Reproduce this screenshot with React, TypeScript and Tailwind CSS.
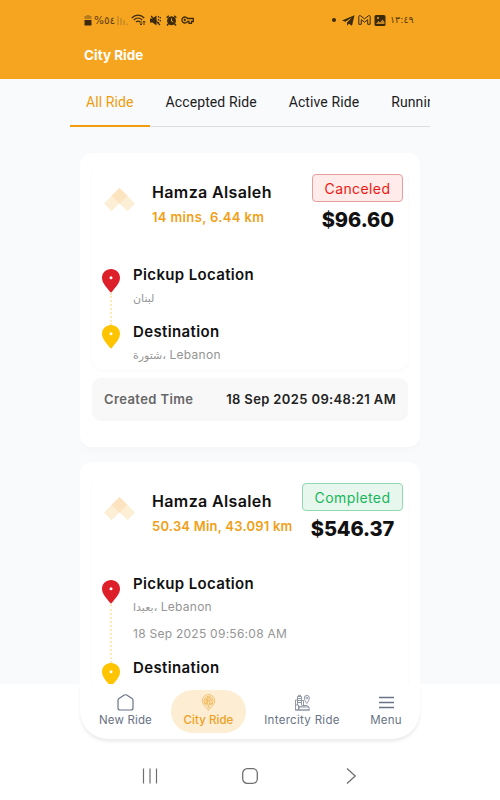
const tabs = [
    { label: 'All Ride', active: true },
    { label: 'Accepted Ride' },
    { label: 'Active Ride' },
    { label: 'Running Ride' },
]

const StatusBar = () => {
    return (
        <div className="flex h-[40px] items-center justify-between pr-[14px] pl-[14px] text-[#3b2a0c]">
            <div className="flex items-center">
                <svg className="h-[11px] w-[8px]" viewBox="0 0 8 11">
                    <path d="M2.5 0h3v1H7.500V4H.5V1h2z" fill="#b37a1e" />
                    <path d="M.5 5h7v5.500H.5z" fill="currentColor" />
                </svg>
                <span className="ml-[2px] w-[20px] font-['DejaVu_Sans'] text-[10.5px] leading-none opacity-85 [direction:ltr] [unicode-bidi:bidi-override]">%٥٤</span>
                <svg className="ml-[3px] h-[10px] w-[11px]" viewBox="0 0 11 10" stroke="#bf8424" strokeWidth="1.2">
                    <path d="M1 1v9M4 3v7M7 5v5M10 8.5v1.5" />
                </svg>
                <svg className="ml-[3px] h-[12px] w-[15px]" viewBox="0 0 15 12" fill="none" stroke="currentColor" strokeWidth="1.1">
                    <path d="M.7 4C4.5.2 9.5.2 13.3 4M2.8 6c2.600-2.500 5.800-2.500 8.400 0M5 8c1.300-1.200 2.700-1.200 4 0" />
                    <path d="M10 7v4M8.700 9.700L10 11l1.300-1.300M13 11V7M11.700 8.300L13 7l1.300 1.300" strokeWidth=".9" />
                </svg>
                <svg className="ml-[4px] h-[11px] w-[11px]" viewBox="0 0 11 11" fill="currentColor">
                    <path d="M0 3.500h2.500L6.500.5v10l-4-3H0z" />
                    <path d="M1 1l9 9M8.500 1v1.500M8.500 4v1.500M8.500 7v1M10.300 2v1.500M10.300 5v1.500" stroke="currentColor" strokeWidth="1.200" />
                </svg>
                <svg className="ml-[5px] h-[11px] w-[11px]" viewBox="0 0 11 11" fill="none" stroke="currentColor">
                    <circle cx="5.500" cy="5.800" r="4" fill="currentColor" />
                    <path d="M.7 2.700L2.800.8M10.300 2.700L8.200.8M2.300 9L1 10.500M8.700 9l1.300 1.500" strokeWidth="1.500" />
                    <path d="M5.500 3.500V6l1.800 1" stroke="#f6a521" />
                </svg>
                <svg className="ml-[4px] h-[8px] w-[13px]" viewBox="0 0 13 8" fill="none" stroke="currentColor" strokeWidth="1.300">
                    <path d="M6.500 2.500A3 3 0 1 0 6.500 5.500H8v1.800h2.500V5.500h1.800v-3z" />
                    <circle cx="3.800" cy="4" r=".5" />
                </svg>
            </div>
            <div className="flex items-center">
                <span className="size-[4px] rounded-full bg-[#3b2a0c]" />
                <svg className="ml-[6px] h-[11px] w-[13px]" viewBox="0 0 13 11" fill="currentColor">
                    <path d="M12.500.3L0 5.400l3.300 1.300L10 2.500 5 7.400v3.300l1.800-2 3.200 2z" />
                </svg>
                <svg className="ml-[3px] h-[10px] w-[13px]" viewBox="0 0 13 10" fill="none" stroke="currentColor" strokeWidth="1">
                    <path d="M.8 9.300V1.500C.8.500 2 .3 2.700.9l3.800 3 3.800-3c.8-.6 1.900-.4 1.900.6v7.800H9.700V4.700L6.500 7.200 3.300 4.700v4.600z" />
                </svg>
                <svg className="ml-[3px] h-[11px] w-[12px]" viewBox="0 0 12 11">
                    <rect x=".5" width="11" height="11" rx="1.500" fill="currentColor" />
                    <path d="M2 9l2.500-3 1.700 1.500L8.500 4.500l2 2.500v2z" fill="#c98924" />
                    <circle cx="4" cy="3" r="1" fill="#f6a521" />
                </svg>
                <span className="ml-[4px] w-[26px] font-['DejaVu_Sans'] text-[9.5px] leading-none whitespace-nowrap opacity-85">١٣:٤٩</span>
            </div>
        </div>
    )
}

const Pin = ({ color }: { color: string }) => {
    return (
        <svg className="h-[24px] w-[18px] shrink-0" viewBox="0 0 18 24">
            <path d="M9 0C4 0 0 3.900 0 8.800 0 14.500 5 18.500 8 22.800q1 1.400 2 0C13 18.500 18 14.500 18 8.800 18 3.900 14 0 9 0z" fill={color} />
            <circle cx="9" cy="8.800" r="1.500" fill="#fff" />
        </svg>
    )
}

const Logo = () => {
    return (
        <svg className="mt-[23px] h-[24px] w-[32px] shrink-0" viewBox="0 0 32 24">
            <path d="M15.500 0L31 15.500l-7.500 7.800-8-7.800-8 7.800L0 15.500z" fill="#fdeed6" />
            <path d="M15.500 0l8 7.800-8 7.800-8-7.800z" fill="#fce4c0" />
        </svg>
    )
}

type Address = {
    local: string
    country?: string
}

const AddressLine = ({ local, country }: Address) => {
    return (
        <p className="mt-[4px] flex h-[18px] items-center whitespace-nowrap">
            <bdi className="text-[11px] tracking-normal">{local}</bdi>
            {country && <span className="whitespace-pre">، {country}</span>}
        </p>
    )
}

type RideProps = {
    trip: string
    tripClass: string
    status: string
    statusClass: string
    price: string
    priceClass: string
    pickup: Address
    pickupTime?: string
    destination: Address
    created: string
}

const RideCard = (ride: RideProps) => {
    return (
        <div className="h-[294px] shrink-0 rounded-[12px] bg-white px-[12px] pt-[12px] shadow-[0_3px_6px_rgba(15,23,42,0.02)]">
            <div className={`rounded-[10px] px-[5px] shadow-[0_1px_3px_rgba(0,0,0,0.035)] ${ride.pickupTime ? 'h-[234px]' : 'h-[205px]'}`}>
                <div className="flex h-[96px] pl-[7px]">
                    <Logo />
                    <div className="ml-[16px] flex-1 whitespace-nowrap">
                        <h2 className="mt-[16px] text-[16px] leading-[22px] font-semibold tracking-[0.370px] text-[#111]">Hamza Alsaleh</h2>
                        <p className={`mt-[5px] text-[13px] leading-[18px] font-semibold text-[#f09f16] ${ride.tripClass}`}>{ride.trip}</p>
                    </div>
                    <div className="flex flex-col items-end pt-[9px]">
                        <span className={`flex h-[28px] items-center justify-center rounded-[4px] border text-[14px] ${ride.statusClass}`}>{ride.status}</span>
                        <strong className={`mt-[6px] mr-[9px] text-[20px] leading-[24px] font-extrabold text-[#111] ${ride.priceClass}`}>{ride.price}</strong>
                    </div>
                </div>
                <div className="flex pl-[5px]">
                    <div className={`flex shrink-0 flex-col items-center ${ride.pickupTime ? 'h-[117px] pt-[10px]' : 'h-[88px] pt-[8px]'}`}>
                        <Pin color="#dc1f28" />
                        <span className="w-0 flex-1 border-l-2 border-dotted border-[#fce9b8]" />
                        <Pin color="#fec400" />
                    </div>
                    <div className="ml-[13px] text-[12px] leading-[18px] tracking-[0.260px] text-[#959595]">
                        <h3 className="mt-[3px] text-[15px] leading-[21px] font-semibold tracking-[0.350px] text-[#111]">Pickup Location</h3>
                        <AddressLine {...ride.pickup} />
                        {ride.pickupTime && <p className="mt-[9px] h-[18px] whitespace-nowrap">{ride.pickupTime}</p>}
                        <h3 className={`text-[15px] leading-[20px] font-semibold tracking-[0.370px] text-[#111] ${ride.pickupTime ? 'mt-[15px]' : 'mt-[15px]'}`}>Destination</h3>
                        <AddressLine {...ride.destination} />
                    </div>
                </div>
            </div>
            <div className="mt-[8px] flex h-[43px] items-center justify-between rounded-[9px] bg-[#f8f8f8] px-[12px] text-[13px] font-semibold">
                <span className="tracking-[0.400px] text-[#666]">Created Time</span>
                <span className="tracking-[0.370px] text-[#222]">{ride.created}</span>
            </div>
        </div>
    )
}

const HomeIcon = () => {
    return (
        <svg className="h-[17px] w-[17px]" viewBox="0 0 17 17" fill="none" stroke="currentColor" strokeWidth="1.200" strokeLinejoin="round">
            <path d="M1 6.500Q1 5.300 2 4.600L7.300 1.100Q8.500.4 9.700 1.100L15 4.600q1 .7 1 1.900V14q0 2-2 2H3q-2 0-2-2z" />
        </svg>
    )
}

const CityIcon = () => {
    return (
        <svg className="h-[17px] w-[17px] opacity-80" viewBox="0 0 17 17" fill="none" stroke="currentColor" strokeWidth=".7">
            <path d="M8.500 16.300C6.500 13.300 2.300 10.500 2.300 6.800a6.200 6.200 0 1 1 12.400 0c0 3.700-4.200 6.500-6.200 9.500z" />
            <circle cx="8.500" cy="6.800" r="4.500" />
            <path d="M5 10V5.500h2V10M7 10V3.500h3V10M10 5.500h2V10M4.500 10h8M7 5h3M7 6.500h3M7 8h3" />
            <circle cx="8.500" cy="13" r=".7" />
        </svg>
    )
}

const IntercityIcon = () => {
    return (
        <svg className="h-[17px] w-[17px] opacity-80" viewBox="0 0 17 17" fill="none" stroke="currentColor" strokeWidth=".9">
            <path d="M3.500 11V2.500h4V11M4.500 2.500V1.300h2v1.200M3.500 4.500h4M3.500 6.500h4M3.500 8.500h4M1.500 11V6h2M7.500 6.500h2v5M1.500 11v5h3v-5zM9 11.500h4l2 1.500v3H5v-3zM5 13h10M10 11.500V13M1 16h15" />
            <path d="M12.800 9.500C12 8 10.300 6.300 10.300 4a2.500 2.700 0 1 1 5 0c0 2.300-1.500 4-2.500 5.500z" />
            <circle cx="12.800" cy="4" r=".9" />
        </svg>
    )
}

const MenuIcon = () => {
    return (
        <svg className="h-[17px] w-[17px]" viewBox="0 0 17 17" fill="none" stroke="currentColor" strokeWidth="1.300">
            <path d="M1 3.500h15M1 8.500h15M1 13.500h15" />
        </svg>
    )
}

const BottomNav = () => {
    return (
        <div className="h-[116px] shrink-0 bg-white">
            <nav className="mx-auto flex h-[55px] w-[340px] rounded-b-[28px] bg-white pt-[6px] text-[11.500px] whitespace-nowrap text-[#697386] shadow-[0_3px_3px_rgba(0,0,0,0.07)]">
                <div className="flex h-[43px] w-[91px] flex-col items-center pt-[4px]">
                    <HomeIcon />
                    <span className="mt-[1px] leading-[17px] tracking-[0.150px]">New Ride</span>
                </div>
                <div className="flex h-[43px] w-[75px] flex-col items-center rounded-full bg-[#fdedd3] pt-[4px] text-[#eda022]">
                    <CityIcon />
                    <span className="mt-[1px] leading-[17px] font-medium tracking-[0.050px]">City Ride</span>
                </div>
                <div className="flex h-[43px] w-[112px] flex-col items-center pt-[4px]">
                    <IntercityIcon />
                    <span className="mt-[1px] leading-[17px] tracking-[0.300px]">Intercity Ride</span>
                </div>
                <div className="flex h-[43px] w-[56px] flex-col items-center pt-[4px]">
                    <MenuIcon />
                    <span className="mt-[1px] leading-[17px] tracking-[0.200px]">Menu</span>
                </div>
            </nav>
            <div className="mx-auto flex h-[61px] w-[217px] items-center justify-between pt-[12px] text-[#6f6f6f]">
                <svg className="h-[18px] w-[16px]" viewBox="0 0 16 18" fill="none" stroke="currentColor" strokeWidth="1.200">
                    <path d="M1.500 1.500v15M8 1.500v15M14.500 1.500v15" />
                </svg>
                <svg className="h-[18px] w-[18px]" viewBox="0 0 18 18" fill="none" stroke="currentColor" strokeWidth="1.300">
                    <rect x="1.700" y="1.700" width="14.600" height="14.600" rx="4.500" />
                </svg>
                <svg className="h-[18px] w-[16px]" viewBox="0 0 16 18" fill="none" stroke="currentColor" strokeWidth="1.300">
                    <path d="M4 1.500L12.200 9 4 16.500" />
                </svg>
            </div>
        </div>
    )
}

const App = () => {
    return (
        <div className="flex h-[800px] w-[500px] flex-col overflow-hidden bg-[#f8fafc] font-['Inter','DejaVu_Sans',sans-serif]">
            <header className="h-[79px] shrink-0 bg-[#f6a521]">
                <div className="mx-auto w-[360px]">
                    <StatusBar />
                    <h1 className="mt-[5px] pl-[14px] text-[13.500px] leading-[20px] font-bold text-white">City Ride</h1>
                </div>
            </header>
            <div className="mx-auto flex h-[48px] w-[360px] shrink-0 overflow-hidden font-['Roboto',sans-serif] text-[14px] tracking-[0.100px] whitespace-nowrap text-[#1c1c1c] shadow-[inset_0_-1px_0_#dcdee1]">
                {tabs.map((tab) => (
                    <div key={tab.label} className={`flex h-[48px] shrink-0 items-center border-b-2 px-[16px] ${tab.active ? 'border-[#f09c0c] text-[#f09c0c]' : 'border-transparent'}`}>
                        {tab.label}
                    </div>
                ))}
            </div>
            <main className="mx-auto flex min-h-0 w-[340px] flex-1 flex-col gap-[15px] overflow-hidden pt-[26px]">
                <RideCard
                    trip="14 mins, 6.44 km"
                    tripClass="tracking-[0.360px]"
                    status="Canceled"
                    statusClass="w-[91px] border-[#e5a09d] bg-[#ffebe9] text-[#eb1812] tracking-[0.400px]"
                    price="$96.60"
                    priceClass="tracking-[-0.050px]"
                    pickup={{ local: 'لبنان' }}
                    destination={{ local: 'شتورة', country: 'Lebanon' }}
                    created="18 Sep 2025 09:48:21 AM"
                />
                <RideCard
                    trip="50.34 Min, 43.091 km"
                    tripClass="tracking-[0.220px]"
                    status="Completed"
                    statusClass="w-[101px] border-[#91d8ae] bg-[#e7f7ee] text-[#17b65a] tracking-[0.400px]"
                    price="$546.37"
                    priceClass="tracking-[-0.150px]"
                    pickup={{ local: 'بعبدا', country: 'Lebanon' }}
                    pickupTime="18 Sep 2025 09:56:08 AM"
                    destination={{ local: 'شتورة', country: 'Lebanon' }}
                    created="18 Sep 2025 09:56:08 AM"
                />
            </main>
            <BottomNav />
        </div>
    )
}

export default App
